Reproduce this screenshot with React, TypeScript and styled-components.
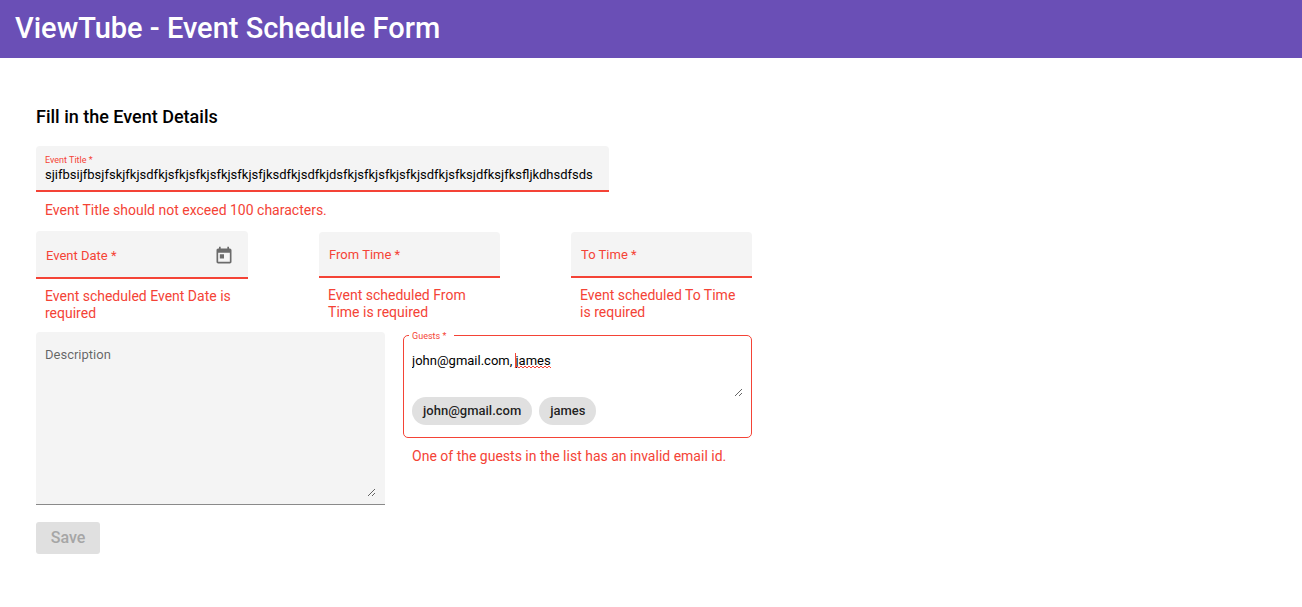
import React, { useState } from "react";
import styled, { createGlobalStyle } from "styled-components";

const RED = "#f44336";

const GlobalStyle = createGlobalStyle`
  * { box-sizing: border-box; }
  body { margin: 0; background: #fff; color: rgba(0, 0, 0, 0.87); }
  body, input, textarea, button { font-family: Roboto, "Liberation Sans", sans-serif; }
`;

const Header = styled.header`
  background: #6a4fb6;
  padding: 12px 15px 14px;
`;

const AppTitle = styled.h1`
  margin: 0;
  color: #fff;
  font-size: 29px;
  line-height: 32px;
  font-weight: 500;
`;

const Page = styled.main`
  padding: 46px 36px 24px;
`;

const Heading = styled.h2`
  margin: 0 0 16px;
  color: #000;
  font-size: 18px;
  line-height: 26px;
  font-weight: 500;
`;

const ScheduleForm = styled.form`
  width: 100%;
  @media (min-width: 900px) {
    width: 55vw;
  }
`;

const TitleRow = styled.div`
  width: 80%;
  min-height: 85px;
`;

const WhenRow = styled.div`
  display: flex;
  justify-content: space-between;
  align-items: flex-start;
  min-height: 101px;
`;

const WhenCell = styled.div<{ $wide?: boolean }>`
  flex: 0 1 ${(p) => (p.$wide ? "212px" : "181px")};
  padding-top: ${(p) => (p.$wide ? "0" : "1px")};
`;

const DetailsRow = styled.div`
  display: grid;
  grid-template-columns: 1fr 1fr;
  gap: 18px;
  align-items: start;
`;

const FilledField = styled.div<{ $height: number; $valid?: boolean }>`
  display: flex;
  align-items: center;
  gap: 4px;
  min-height: ${(p) => p.$height}px;
  padding: 2px 10px 0;
  background: #f4f4f4;
  border-radius: 4px 4px 0 0;
  border-bottom: ${(p) => (p.$valid ? "1px solid #8a8a8a" : `2px solid ${RED}`)};
`;

const StackedField = styled(FilledField)`
  flex-direction: column;
  align-items: stretch;
  gap: 1px;
  padding: 8px 9px 7px;
`;

const DateField = styled(FilledField)`
  padding-top: 4px;
`;

const FloatingLabel = styled.label`
  color: ${RED};
  font-size: 9px;
  line-height: 12px;
`;

const TextInput = styled.input`
  flex: 1;
  width: 100%;
  min-width: 0;
  padding: 0;
  border: 0;
  outline: 0;
  background: transparent;
  color: #000;
  font-size: 13px;
  line-height: 16px;
`;

const RestingLabel = styled.label`
  flex: none;
  color: ${RED};
  font-size: 13px;
  line-height: 16px;
`;

const IconButton = styled.button`
  display: flex;
  margin-right: 4px;
  padding: 0;
  border: 0;
  background: transparent;
  color: #6b6b6b;
`;

const ErrorText = styled.p<{ $line?: number }>`
  margin: 0;
  padding: 9px 10px 0 9px;
  color: ${RED};
  font-size: 14px;
  line-height: ${(p) => p.$line ?? 17}px;
`;

const DescriptionField = styled(FilledField)`
  flex-direction: column;
  align-items: stretch;
  padding: 15px 9px 7px;
`;

const Description = styled.textarea`
  height: 150px;
  padding: 0;
  border: 0;
  outline: 0;
  resize: vertical;
  background: transparent;
  font-size: 13px;
  line-height: 16px;
  &::placeholder { color: rgba(0, 0, 0, 0.6); opacity: 1; }
`;

const GuestsField = styled.fieldset`
  min-width: 0;
  margin: 0;
  padding: 14px 8px 12px;
  border: 1px solid ${RED};
  border-radius: 5px;
`;

const GuestsLegend = styled.legend`
  display: flex;
  align-items: center;
  height: 7px;
  margin-left: -3px;
  padding: 0 8px 0 3px;
`;

const GuestsInputWrap = styled.div`
  position: relative;
`;

const GuestsInput = styled.textarea`
  display: block;
  width: 100%;
  height: 44px;
  padding: 0;
  border: 0;
  outline: 0;
  resize: vertical;
  background: transparent;
  color: #000;
  font-size: 13px;
  line-height: 16px;
`;

const SpellingLayer = styled.div`
  position: absolute;
  inset: 0;
  pointer-events: none;
  color: transparent;
  font-size: 13px;
  line-height: 16px;
`;

const Misspelled = styled.span`
  margin-left: -1px;
  border-left: 1px solid ${RED};
  background-image:
    repeating-linear-gradient(90deg, ${RED} 0 2px, transparent 2px 4px),
    repeating-linear-gradient(90deg, transparent 0 2px, ${RED} 2px 4px);
  background-size: 100% 1px, 100% 1px;
  background-position: 0 calc(100% - 1px), 0 100%;
  background-repeat: no-repeat;
`;

const Chips = styled.ul`
  display: flex;
  flex-wrap: wrap;
  gap: 7px;
  margin: 0;
  padding: 0;
  list-style: none;
`;

const Chip = styled.li`
  padding: 6px 11px;
  border-radius: 14px;
  background: #e0e0e0;
  color: rgba(0, 0, 0, 0.87);
  font-size: 13px;
  line-height: 16px;
  font-weight: 500;
`;

const SaveButton = styled.button`
  display: block;
  margin-top: 17px;
  padding: 0 14px 1px;
  min-width: 64px;
  height: 32px;
  border: 0;
  border-radius: 3px;
  background: #e0e0e0;
  color: #a6a6a6;
  font-size: 16px;
  font-weight: 500;
`;

function CalendarIcon() {
  return (
    <svg width="20" height="20" viewBox="0 0 24 24" fill="currentColor" aria-hidden="true">
      <path d="M19 3h-1V1h-2v2H8V1H6v2H5c-1.11 0-1.99.9-1.99 2L3 19c0 1.1.89 2 2 2h14c1.1 0 2-.9 2-2V5c0-1.1-.9-2-2-2zm0 16H5V8h14v11zM7 10h5v5H7z" />
    </svg>
  );
}

export default function App() {
  const [title, setTitle] = useState(
    "sjifbsijfbsjfskjfkjsdfkjsfkjsfkjsfkjsfkjsfjksdfkjsdfkjdsfkjsfkjsfkjsfkjsdfkjsfksjdfksjfksfljkdhsdfsds"
  );
  const [guests, setGuests] = useState("john@gmail.com, james");
  const names = guests.split(",").map((g) => g.trim()).filter(Boolean);
  const last = names[names.length - 1] ?? "";
  const start = guests.slice(0, guests.lastIndexOf(last));

  return (
    <>
      <GlobalStyle />
      <Header>
        <AppTitle>ViewTube - Event Schedule Form</AppTitle>
      </Header>
      <Page>
        <Heading>Fill in the Event Details</Heading>
        <ScheduleForm noValidate>
          <TitleRow>
            <StackedField $height={46}>
              <FloatingLabel htmlFor="title">Event Title *</FloatingLabel>
              <TextInput id="title" value={title} onChange={(e) => setTitle(e.target.value)} />
            </StackedField>
            <ErrorText $line={18}>Event Title should not exceed 100 characters.</ErrorText>
          </TitleRow>
          <WhenRow>
            <WhenCell $wide>
              <DateField $height={48}>
                <RestingLabel htmlFor="date">Event Date *</RestingLabel>
                <TextInput id="date" />
                <IconButton type="button" aria-label="Open calendar">
                  <CalendarIcon />
                </IconButton>
              </DateField>
              <ErrorText>Event scheduled Event Date is required</ErrorText>
            </WhenCell>
            <WhenCell>
              <FilledField $height={46}>
                <RestingLabel htmlFor="from">From Time *</RestingLabel>
                <TextInput id="from" />
              </FilledField>
              <ErrorText>Event scheduled From Time is required</ErrorText>
            </WhenCell>
            <WhenCell>
              <FilledField $height={46}>
                <RestingLabel htmlFor="to">To Time *</RestingLabel>
                <TextInput id="to" />
              </FilledField>
              <ErrorText>Event scheduled To Time is required</ErrorText>
            </WhenCell>
          </WhenRow>
          <DetailsRow>
            <DescriptionField $height={173} $valid>
              <Description aria-label="Description" placeholder="Description" />
            </DescriptionField>
            <div>
              <GuestsField>
                <GuestsLegend>
                  <FloatingLabel htmlFor="guests">Guests *</FloatingLabel>
                </GuestsLegend>
                <GuestsInputWrap>
                  <GuestsInput
                    id="guests"
                    spellCheck={false}
                    value={guests}
                    onChange={(e) => setGuests(e.target.value)}
                  />
                  <SpellingLayer aria-hidden="true">
                    {start}
                    <Misspelled>{last}</Misspelled>
                  </SpellingLayer>
                </GuestsInputWrap>
                <Chips>
                  {names.map((name) => (
                    <Chip key={name}>{name}</Chip>
                  ))}
                </Chips>
              </GuestsField>
              <ErrorText $line={18}>One of the guests in the list has an invalid email id.</ErrorText>
            </div>
          </DetailsRow>
          <SaveButton type="submit" disabled>
            Save
          </SaveButton>
        </ScheduleForm>
      </Page>
    </>
  );
}
